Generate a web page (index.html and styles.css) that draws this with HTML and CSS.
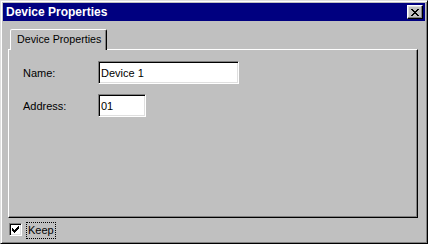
FILE: index.html
```html
<!DOCTYPE html>
<html lang="en">
<head>
  <meta charset="UTF-8" />
  <title>Device Properties</title>
  <link rel="stylesheet" href="styles.css">
</head>
<body>

  <div class="window">
    <!-- TITLE BAR -->
    <div class="titlebar">
      <span class="title">Device Properties</span>
      <button class="close-btn">
        <svg width="8" height="7" viewBox="0 0 8 7">
          <path d="M0 0h2v1h-2z M6 0h2v1h-2z M1 1h2v1h-2z M5 1h2v1h-2z M2 2h4v1h-4z M3 3h2v1h-2z M2 4h4v1h-4z M1 5h2v1h-2z M5 5h2v1h-2z M0 6h2v1h-2z M6 6h2v1h-2z" fill="#000"/>
        </svg>
      </button>
    </div>

    <div class="content">
      <div class="tabs">
        <div class="tab active">Device Properties</div>
      </div>

      <div class="panel">
        <div class="row">
          <label class="label">Name:</label>
          <input class="field name-field" type="text" value="Device 1" />
        </div>
        <div class="row">
          <label class="label">Address:</label>
          <input class="field address-field" type="text" value="01" />
        </div>
      </div>

      <div class="footer">
        <span class="checkbox">
          <svg width="7" height="7" viewBox="0 0 7 7">
            <path d="M6 0h1v1h-1z M5 1h2v1h-2z M0 2h1v1h-1z M4 2h3v1h-3z M0 3h2v1h-2z M3 3h3v1h-3z M0 4h5v1h-5z M1 5h3v1h-3z M2 6h1v1h-1z" fill="#000"/>
          </svg>
        </span>
        <span class="check-label">Keep</span>
      </div>
    </div>
  </div>

</body>
</html>
```

FILE: styles.css
```css
* {
  margin: 0; padding: 0;
  box-sizing: border-box;
}

html, body {
  height: 100%;
  overflow: hidden;
}

body {
  background-color: #c0c0c0;
  font-family: "Liberation Sans", Arial, sans-serif;
  font-size: 11px;
  color: #000;
}

.window {
  width: 428px;
  height: 244px;
  display: flex;
  flex-direction: column;
  padding: 2px;
  background-color: #c0c0c0;
  border: 1px solid;
  border-color: #dfdfdf #000 #000 #dfdfdf;
  box-shadow: inset 1px 1px #fff, inset -1px -1px #808080;
}

/* Title bar */
.titlebar {
  height: 18px;
  display: flex;
  align-items: center;
  justify-content: space-between;
  padding: 0 2px 0 3px;
  background-color: #000080;
  color: #fff;
}

.title {
  font-size: 12px;
  font-weight: bold;
}

.close-btn {
  width: 16px;
  height: 14px;
  display: flex;
  align-items: center;
  justify-content: center;
  padding-top: 1px;
  background-color: #c0c0c0;
  border: 1px solid;
  border-color: #fff #000 #000 #fff;
  box-shadow: inset -1px -1px #808080, inset 1px 1px #dfdfdf;
}

.close-btn svg {
  display: block;
  margin-left: -1px;
}

/* Body */
.content {
  flex: 1;
  display: flex;
  flex-direction: column;
  padding: 8px 7px 0 5px;
}

.tabs {
  display: flex;
  padding-left: 2px;
  position: relative;
  z-index: 1;
}

.tab {
  height: 21px;
  margin-bottom: -1px;
  padding: 3px 5px 0 6px;
  font-size: 10.7px;
  background-color: #c0c0c0;
  border: 1px solid;
  border-bottom: none;
  border-color: #fff #000 transparent #fff;
  border-radius: 2px 2px 0 0;
  box-shadow: inset -1px 0 #808080;
}

.panel {
  height: 169px;
  padding: 11px 14px;
  border: 1px solid;
  border-color: #fff #000 #000 #fff;
  box-shadow: inset -1px -1px #808080;
}

.row {
  display: flex;
  align-items: center;
  margin-bottom: 10px;
}

.label {
  width: 75px;
}

.field {
  height: 23px;
  padding: 1px 0 0 2px;
  font-family: "Liberation Sans", Arial, sans-serif;
  font-size: 11px;
  color: #000;
  background-color: #fff;
  border: 1px solid;
  border-color: #808080 #fff #fff #808080;
  box-shadow: inset 1px 1px #000, inset -1px -1px #dfdfdf;
  outline: none;
}

.name-field {
  width: 141px;
}

.address-field {
  width: 48px;
}

/* Footer */
.footer {
  display: flex;
  align-items: flex-start;
  padding: 4px 0 0 1px;
}

.checkbox {
  width: 13px;
  height: 13px;
  margin-top: 1px;
  display: flex;
  align-items: center;
  justify-content: center;
  background-color: #fff;
  border: 1px solid;
  border-color: #808080 #fff #fff #808080;
  box-shadow: inset 1px 1px #000, inset -1px -1px #dfdfdf;
}

.check-label {
  margin-left: 4px;
  padding: 1px 1px 2px 1px;
  border: 1px dotted #000;
}
```
